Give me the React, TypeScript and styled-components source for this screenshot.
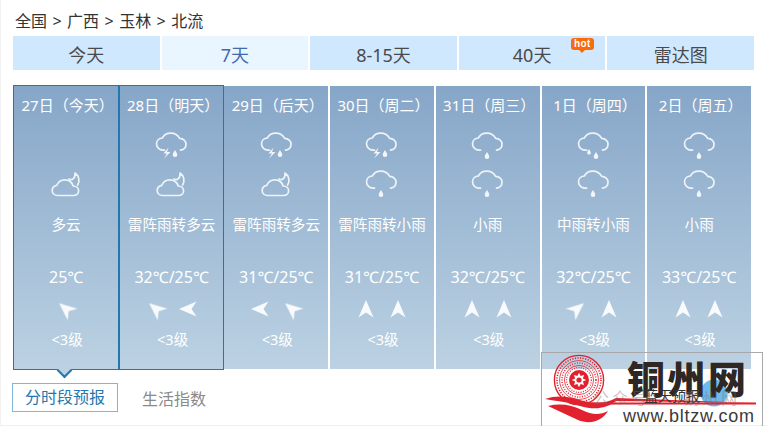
import styled, { createGlobalStyle } from "styled-components";

type Sky = "cloud" | "storm" | "rain" | "rain2";

const days: {
  date: string;
  icons: (Sky | null)[];
  desc: string;
  temp: string;
  winds: number[];
  selected?: boolean;
}[] = [
  { date: "27日（今天）", icons: [null, "cloud"], desc: "多云", temp: "25℃", winds: [-50], selected: true },
  { date: "28日（明天）", icons: ["storm", "cloud"], desc: "雷阵雨转多云", temp: "32℃/25℃", winds: [-50, -90], selected: true },
  { date: "29日（后天）", icons: ["storm", "cloud"], desc: "雷阵雨转多云", temp: "31℃/25℃", winds: [-90, -50] },
  { date: "30日（周二）", icons: ["storm", "rain"], desc: "雷阵雨转小雨", temp: "31℃/25℃", winds: [0, 0] },
  { date: "31日（周三）", icons: ["rain", "rain"], desc: "小雨", temp: "32℃/25℃", winds: [0, 0] },
  { date: "1日（周四）", icons: ["rain2", "rain"], desc: "中雨转小雨", temp: "32℃/25℃", winds: [50, 0] },
  { date: "2日（周五）", icons: ["rain", "rain"], desc: "小雨", temp: "33℃/25℃", winds: [0, 0] },
];

const tabs = ["今天", "7天", "8-15天", "40天", "雷达图"];

const Global = createGlobalStyle`
  html, body { margin: 0; padding: 0; background: #fff; }
  body { font-family: "Noto Sans", "Noto Sans CJK SC", sans-serif; }
`;

const Frame = styled.div`
  position: relative;
  box-sizing: border-box;
  width: 767px;
  height: 426px;
  padding-left: 12px;
  border-left: 1px solid #f2f2f2;
  border-bottom: 1px solid #eeeeee;
`;

const Crumb = styled.div`
  box-sizing: border-box;
  height: 36px;
  padding: 6px 0 0 2px;
  font-size: 16px;
  line-height: 30px;
  word-spacing: 1.3px;
  color: #333;
  white-space: pre;
`;

const TabBar = styled.ul`
  display: grid;
  grid-template-columns: repeat(5, 1fr);
  gap: 2px;
  width: 741px;
  height: 34px;
  margin: 0;
  padding: 0;
  list-style: none;
`;

const Tab = styled.li<{ $active?: boolean }>`
  position: relative;
  height: 34px;
  padding-top: 2px;
  box-sizing: border-box;
  text-align: center;
  font-size: 18px;
  line-height: 34px;
  background: ${(p) => (p.$active ? "#e9f5ff" : "#cfe8fe")};
  color: ${(p) => (p.$active ? "#4468ae" : "#4a4a4a")};
`;

const Hot = styled.span`
  position: absolute;
  left: 112px;
  top: 2px;
  width: 23px;
  height: 12px;
  border-radius: 3px;
  background: #f96a0c;
  color: #fff;
  font: bold 10px/12px "Liberation Sans", sans-serif;
  letter-spacing: 0.3px;
  &::after {
    content: "";
    position: absolute;
    left: 8px;
    top: 12px;
    border: 3px solid transparent;
    border-top-color: #f96a0c;
    border-bottom: 0;
  }
`;

const Cards = styled.div`
  display: grid;
  grid-template-columns: repeat(7, 1fr);
  gap: 2px;
  width: 738px;
  height: 283px;
  margin-top: 16px;
`;

const Card = styled.div<{ $selected?: boolean }>`
  position: relative;
  box-sizing: border-box;
  display: flex;
  flex-direction: column;
  align-items: center;
  color: #fff;
  background: linear-gradient(180deg, #86a6c8 0%, #bcd2e3 100%);
  ${(p) =>
    p.$selected &&
    `
    margin-top: -1px;
    margin-bottom: -1px;
    border: 1px solid #2277ae;
    height: 285px;
    &:first-child { margin-right: -2.5px; }
    &:nth-child(2) { margin-left: 0.5px; margin-right: -1.6px; }
    &:first-child::after {
      content: "";
      position: absolute;
      left: 45px;
      bottom: -7px;
      width: 11px;
      height: 11px;
      background: #bcd2e3;
      border-right: 2px solid #2277ae;
      border-bottom: 2px solid #2277ae;
      box-sizing: border-box;
      transform: rotate(45deg);
    }
  `}
`;

const DateLine = styled.div`
  height: 38px;
  padding-left: 3px;
  font-size: 15px;
  line-height: 38px;
  white-space: nowrap;
`;

const IconSlots = styled.div`
  display: flex;
  flex-direction: column;
  margin-top: 3px;
`;

const IconSlot = styled.div`
  display: flex;
  align-items: center;
  justify-content: center;
  width: 40px;
  height: 38px;
`;

const Desc = styled.div`
  height: 44px;
  font-size: 14.6px;
  line-height: 42px;
  white-space: nowrap;
`;

const Temp = styled.div`
  height: 34px;
  margin-top: 13px;
  font-size: 16px;
  line-height: 34px;
  white-space: nowrap;
`;

const WindRow = styled.div`
  display: flex;
  align-items: center;
  justify-content: center;
  gap: 12px;
  height: 30px;
`;

const Level = styled.div`
  height: 30px;
  padding-left: 2px;
  font-size: 14.5px;
  line-height: 30px;
`;

const SubNav = styled.div`
  display: flex;
  align-items: center;
  margin: 14px 0 0 -1px;
`;

const SubActive = styled.div`
  box-sizing: border-box;
  width: 106px;
  height: 29px;
  border: 1px solid #7fb6d9;
  color: #1f78b0;
  font-size: 16px;
  line-height: 27px;
  text-align: center;
`;

const SubLink = styled.div`
  margin-left: 24px;
  color: #8a8a8a;
  font-size: 16px;
`;

const Logo = styled.div`
  position: absolute;
  left: 540px;
  top: 352px;
  box-sizing: border-box;
  width: 222px;
  height: 75px;
  border: 1px solid #a9a9a9;
  border-bottom-color: #bbb;
`;

const LogoArt = styled.svg`
  position: absolute;
  left: 0;
  top: 0;
`;

const LogoTitle = styled.div`
  position: absolute;
  left: 85px;
  top: 1px;
  color: #2e2724;
  font: 900 38px/46px "Noto Sans CJK SC", sans-serif;
  letter-spacing: 2.5px;
  white-space: nowrap;
`;

const LogoSub = styled.div`
  position: absolute;
  left: 102px;
  top: 33px;
  color: #333;
  font: 14px/18px "Noto Sans CJK SC", sans-serif;
  white-space: nowrap;
`;

const LogoUrl = styled.div`
  position: absolute;
  left: 81px;
  top: 52px;
  color: #3a3a3a;
  font: 18px/22px "Liberation Sans", sans-serif;
  letter-spacing: 0.75px;
  white-space: nowrap;
`;

const Watermark = styled.div<{ $left: number }>`
  position: absolute;
  left: ${(p) => p.$left}px;
  top: 33px;
  color: rgba(110, 110, 110, 0.42);
  font: 16px/22px "Noto Sans CJK SC", sans-serif;
  letter-spacing: 3px;
  white-space: nowrap;
`;

const Drop = ({ x, y, s = 1 }: { x: number; y: number; s?: number }) => (
  <path
    d={`M${x} ${y}c${1.3 * s} ${2.4 * s} ${2.3 * s} ${3.4 * s} ${2.3 * s} ${4.7 * s}a${2.3 * s} ${2.3 * s} 0 0 1 ${-4.6 * s} 0c0 ${-1.3 * s} ${1 * s} ${-2.3 * s} ${2.3 * s} ${-4.7 * s}z`}
    fill="#f2f6fa"
    stroke="none"
  />
);

const CLOUD_OPEN = "M9.5 18.2C5 18.5 1.5 15.6 1.5 11.8C1.5 8.6 4 6.2 7.3 6C9 2.9 12.2 1.2 15.8 1.2C19.8 1.2 23 3.3 24.7 6.4C28.3 6.5 31 9 31 12.2C31 15.4 28.8 17.6 25.5 18.2";

const SkyIcon = ({ kind }: { kind: Sky }) => {
  if (kind === "cloud") {
    return (
      <svg width="31" height="26" viewBox="0 0 31 26" fill="none" stroke="#eef3f8" strokeWidth="1.7" strokeLinecap="round" strokeLinejoin="round">
        <path d="M6.5 24.5C3.4 24.5 1.2 22.2 1.2 19.5C1.2 16.8 3.2 14.7 5.8 14.3C7 11.2 10.2 8.8 13.8 8.8C18 8.8 21.2 11.6 22.2 15C25.3 15 27.6 17 27.6 19.8C27.6 22.5 25.5 24.5 22.8 24.5Z" />
        <path d="M18 8C21 9.8 24.6 7.4 24 2C27.6 4.4 29.4 9.4 26.6 14" />
      </svg>
    );
  }
  return (
    <svg width="33" height="28" viewBox="0 0 33 28" fill="none" stroke="#eef3f8" strokeWidth="1.7" strokeLinecap="round" strokeLinejoin="round">
      <path d={CLOUD_OPEN} />
      {kind === "storm" && (
        <>
          <path d="M13.5 15.5L8.5 21.5H12L9 26.5L15.5 20H12Z" fill="#f2f6fa" stroke="none" />
          <Drop x={20} y={18} />
        </>
      )}
      {kind === "rain" && <Drop x={16} y={20} />}
      {kind === "rain2" && (
        <>
          <Drop x={12} y={17} s={0.8} />
          <Drop x={19} y={20} />
        </>
      )}
    </svg>
  );
};

const ArrowSvg = styled.svg<{ $angle: number }>`
  transform: rotate(${(p) => p.$angle}deg);
  filter: blur(0.45px);
`;

const WindArrow = ({ angle }: { angle: number }) => (
  <ArrowSvg $angle={angle} width="20" height="20" viewBox="-10 -10 20 20">
    <path d="M0 -9L7.5 8.5L0 3.5L-7.5 8.5Z" fill="#f8fafc" />
  </ArrowSvg>
);

const STAR = Array.from({ length: 16 }, (_, i) => {
  const r = i % 2 ? 4.2 : 7.2;
  const a = (i * Math.PI) / 8;
  return `${(37 + r * Math.sin(a)).toFixed(2)},${(27 - r * Math.cos(a)).toFixed(2)}`;
}).join(" ");

const Seal = () => (
  <g fill="none" stroke="#e2212f">
    <circle cx="37" cy="27" r="24.6" strokeWidth="1.4" />
    <circle cx="37" cy="27" r="22" strokeWidth="1.6" strokeDasharray="1.2 1.4" />
    <circle cx="37" cy="27" r="19.4" strokeWidth="0.8" />
    <circle cx="37" cy="27" r="17" strokeWidth="1.5" strokeDasharray="1 1.5" />
    <circle cx="37" cy="27" r="14.6" strokeWidth="0.8" />
    <circle cx="37" cy="27" r="12.4" strokeWidth="1.2" strokeDasharray="1 1.4" />
    <circle cx="37" cy="27" r="10" fill="#e2212f" stroke="none" />
    <polygon points={STAR} fill="#fff" stroke="none" />
    <circle cx="37" cy="27" r="2.6" fill="#e2212f" stroke="none" />
  </g>
);

export default function App() {
  return (
    <Frame>
      <Global />
      <Crumb>全国 &gt; 广西 &gt; 玉林 &gt; 北流</Crumb>
      <TabBar>
        {tabs.map((t) => (
          <Tab key={t} $active={t === "7天"}>
            {t}
            {t === "40天" && <Hot>hot</Hot>}
          </Tab>
        ))}
      </TabBar>
      <Cards>
        {days.map((d) => (
          <Card key={d.date} $selected={d.selected}>
            <DateLine>{d.date}</DateLine>
            <IconSlots>
              {d.icons.map((icon, i) => (
                <IconSlot key={i}>{icon && <SkyIcon kind={icon} />}</IconSlot>
              ))}
            </IconSlots>
            <Desc>{d.desc}</Desc>
            <Temp>{d.temp}</Temp>
            <WindRow>
              {d.winds.map((w, i) => (
                <WindArrow key={i} angle={w} />
              ))}
            </WindRow>
            <Level>&lt;3级</Level>
          </Card>
        ))}
      </Cards>
      <SubNav>
        <SubActive>分时段预报</SubActive>
        <SubLink>生活指数</SubLink>
      </SubNav>
      <Logo>
        <LogoArt width="220" height="73" viewBox="0 0 220 73">
          <circle cx="172" cy="40" r="13.5" fill="#6fbaea" />
          <Seal />
          <path d="M3 46C14 42 26 43 38 47C52 51 62 51 74 45L214 50L74 48C64 56 52 57 38 53C26 49 14 48 3 46Z" fill="#e2212f" />
          <path d="M6 53C18 50 30 52 40 57C50 62 58 62 66 58C60 68 48 72 36 67C26 62 16 58 6 53Z" fill="#e2212f" />
          <rect x="50" y="49.5" width="164" height="2" fill="#e2212f" />
        </LogoArt>
        <LogoTitle>铜州网</LogoTitle>
        <LogoSub>蓝天预报</LogoSub>
        <LogoUrl>www.bltzw.com</LogoUrl>
        <Watermark $left={51}>公众号 ·</Watermark>
        <Watermark $left={141}>铜州网</Watermark>
      </Logo>
    </Frame>
  );
}
